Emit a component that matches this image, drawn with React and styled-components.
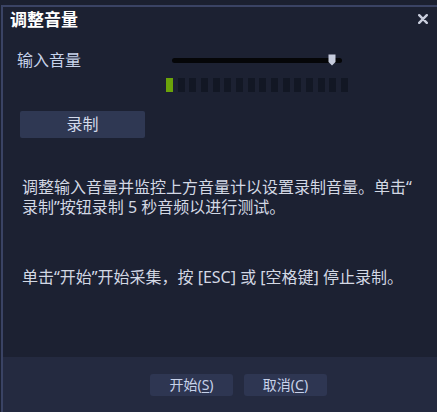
import styled, { createGlobalStyle } from 'styled-components';

const GlobalStyle = createGlobalStyle`
  html, body {
    margin: 0;
    padding: 0;
    background: #1b2030;
    overflow: hidden;
  }
  body {
    font-family: "Noto Sans", "Noto Sans CJK SC", sans-serif;
  }
`;

const Dialog = styled.div`
  margin: 5px 0 0 1px;
  height: 405px;
  border-top: 2px solid #3a4364;
  border-left: 2px solid #3a4364;
  background: #1c2132;
  display: flex;
  flex-direction: column;
`;

const TitleBar = styled.div`
  height: 26px;
  display: flex;
  align-items: center;
  justify-content: space-between;
  padding: 0 9px 0 7px;
`;

const Title = styled.h1`
  margin: 0;
  font-size: 17px;
  font-weight: 700;
  color: #ffffff;
  line-height: 26px;
`;

const CloseButton = styled.button`
  border: 0;
  padding: 0;
  background: none;
  width: 10px;
  height: 10px;
  display: flex;
  cursor: pointer;
  margin-top: -2px;
`;

const Body = styled.div`
  flex: 1;
  padding: 17px 0 0 14px;
  color: #d2d8e6;
`;

const VolumeRow = styled.div`
  display: grid;
  grid-template-columns: 149px 182px;
`;

const Label = styled.div`
  font-size: 16px;
  line-height: 20px;
  color: #c7d3ea;
`;

const Controls = styled.div`
  display: flex;
  flex-direction: column;
`;

const Slider = styled.div`
  position: relative;
  margin: 4px 0 0 6px;
  width: 170px;
  height: 12px;
  display: flex;
  align-items: center;
`;

const Track = styled.div`
  width: 100%;
  height: 5px;
  border-radius: 3px;
  background: #050608;
`;

const Thumb = styled.svg`
  position: absolute;
  top: 0;
  left: ${p => p.$pos}px;
`;

const Meter = styled.div`
  margin-top: 12px;
  display: grid;
  grid-template-columns: repeat(16, 7px);
  column-gap: 4.67px;
`;

const Segment = styled.div`
  height: 14px;
  background: ${p => (p.$on ? '#6ba30a' : '#121724')};
`;

const RecordButton = styled.button`
  margin: 19px 0 0 3px;
  width: 125px;
  height: 27px;
  border: 0;
  border-radius: 2px;
  background: #2f3853;
  color: #d4dbeb;
  font-family: inherit;
  font-size: 16px;
  line-height: 27px;
  padding: 0;
`;

const Hint = styled.p`
  margin: ${p => p.$gap}px 0 0 5px;
  font-size: 16px;
  line-height: 20px;
  color: #d3d8e4;
`;

const Footer = styled.div`
  height: 55px;
  background: #242a40;
  display: flex;
  align-items: center;
  gap: 11px;
  padding-left: 147px;
`;

const FooterButton = styled.button`
  width: 83px;
  height: 22px;
  border: 0;
  border-radius: 3px;
  background: #2e3652;
  color: #c7d2ea;
  font-family: inherit;
  font-size: 14px;
  line-height: 22px;
  padding: 0;

  u {
    text-underline-offset: 2px;
  }
`;

const segments = Array.from({ length: 16 }, (_, i) => i === 0);

export default function App() {
  return (
    <>
      <GlobalStyle />
      <Dialog>
        <TitleBar>
          <Title>调整音量</Title>
          <CloseButton aria-label="关闭">
            <svg width="10" height="10" viewBox="0 0 10 10">
              <path d="M1.2 1.2 L8.8 8.8 M8.8 1.2 L1.2 8.8" stroke="#c9cedd" strokeWidth="2.4" strokeLinecap="round" />
            </svg>
          </CloseButton>
        </TitleBar>
        <Body>
          <VolumeRow>
            <Label>输入音量</Label>
            <Controls>
              <Slider>
                <Track />
                <Thumb $pos={156} width="8" height="12" viewBox="0 0 8 12">
                  <path d="M0.5 0.5 H7.5 V8 L4 11.5 L0.5 8 Z" fill="#c6ccdd" />
                </Thumb>
              </Slider>
              <Meter>
                {segments.map((on, i) => (
                  <Segment key={i} $on={on} />
                ))}
              </Meter>
            </Controls>
          </VolumeRow>
          <RecordButton>录制</RecordButton>
          <Hint $gap={39}>
            调整输入音量并监控上方音量计以设置录制音量。单击“
            <br />
            录制”按钮录制 5 秒音频以进行测试。
          </Hint>
          <Hint $gap={50}>单击“开始”开始采集，按 [ESC] 或 [空格键] 停止录制。</Hint>
        </Body>
        <Footer>
          <FooterButton>开始(<u>S</u>)</FooterButton>
          <FooterButton>取消(<u>C</u>)</FooterButton>
        </Footer>
      </Dialog>
    </>
  );
}
